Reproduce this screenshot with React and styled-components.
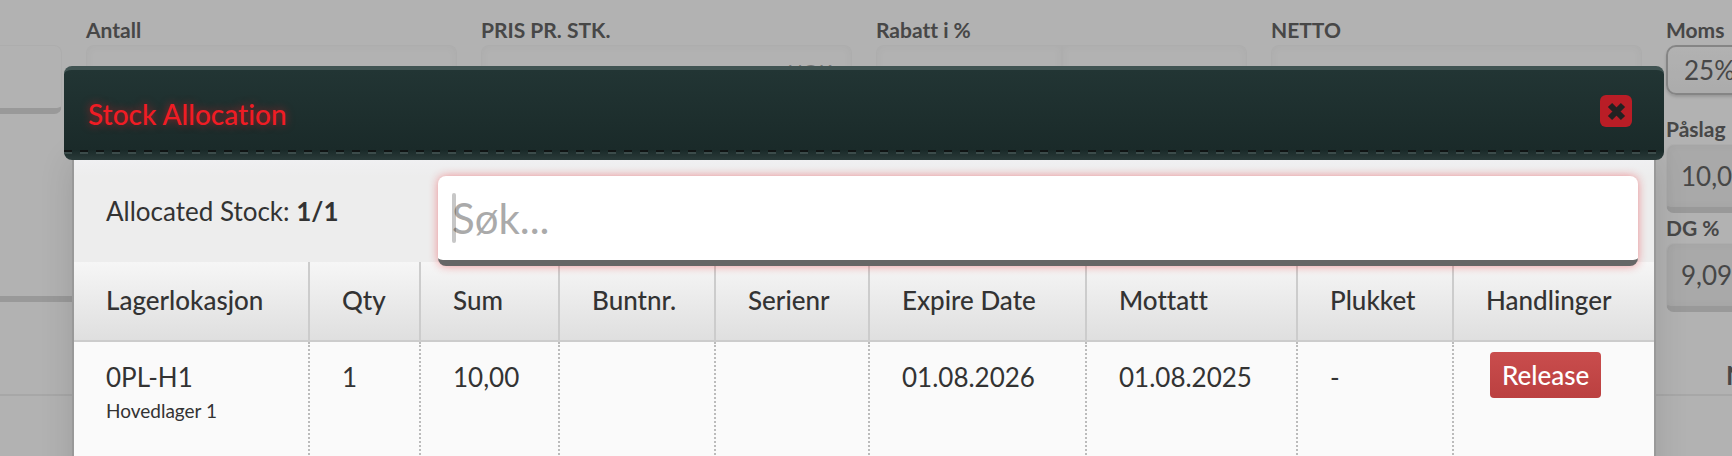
import { useState } from 'react';
import styled, { createGlobalStyle } from 'styled-components';

const columns = [
    { name: 'Lagerlokasjon', width: 236 },
    { name: 'Qty', width: 111 },
    { name: 'Sum', width: 139 },
    { name: 'Buntnr.', width: 156 },
    { name: 'Serienr', width: 154 },
    { name: 'Expire Date', width: 217 },
    { name: 'Mottatt', width: 211 },
    { name: 'Plukket', width: 156 },
    { name: 'Handlinger', width: 200 },
];

const stock = [
    {
        location: '0PL-H1',
        warehouse: 'Hovedlager 1',
        qty: '1',
        sum: '10,00',
        bundle: '',
        serial: '',
        expires: '01.08.2026',
        received: '01.08.2025',
        picked: '-',
    },
];

function OrderLine () {
    return (
        <>
            <LineForm>
                <div>
                    <Field>
                        <FieldInput $cut aria-label='Produkt' />
                    </Field>
                    <Comment aria-label='Kommentar' />
                </div>
                <Field>
                    <FieldLabel htmlFor='antall'>Antall</FieldLabel>
                    <FieldInput id='antall' />
                </Field>
                <Field>
                    <FieldLabel htmlFor='pris'>PRIS PR. STK.</FieldLabel>
                    <CurrencyInput id='pris' defaultValue='NOK' />
                </Field>
                <Field>
                    <FieldLabel htmlFor='rabatt'>Rabatt i %</FieldLabel>
                    <FieldGroup>
                        <FieldInput id='rabatt' $first />
                        <FieldInput aria-label='Rabatt' $last />
                    </FieldGroup>
                </Field>
                <Field>
                    <FieldLabel htmlFor='netto'>NETTO</FieldLabel>
                    <FieldInput id='netto' />
                </Field>
                <SideFields>
                    <Field>
                        <FieldLabel htmlFor='moms'>Moms</FieldLabel>
                        <FieldSelect id='moms'>
                            <option>25%</option>
                        </FieldSelect>
                    </Field>
                    <Field>
                        <FieldLabel htmlFor='paslag'>Påslag</FieldLabel>
                        <FieldInput id='paslag' $filled defaultValue='10,00' />
                    </Field>
                    <Field>
                        <FieldLabel htmlFor='dg'>DG %</FieldLabel>
                        <FieldInput id='dg' $filled defaultValue='9,09' />
                    </Field>
                </SideFields>
            </LineForm>
            <LineTotal>N</LineTotal>
        </>
    );
}

export default function App () {
    const [search, setSearch] = useState('');

    return (
        <>
            <GlobalStyle />
            <Page>
                <OrderLine />
                <Backdrop />
                <Modal role='dialog' aria-labelledby='modal-title'>
                    <ModalHeader>
                        <ModalTitle id='modal-title'>Stock Allocation</ModalTitle>
                        <CloseButton type='button' aria-label='Close'>
                            <svg width='20' height='20' viewBox='0 0 20 20'>
                                <path
                                    d='M4 4 L17 17 M17 4 L4 17'
                                    stroke='#222'
                                    strokeWidth='6'
                                    strokeLinejoin='round'
                                />
                            </svg>
                        </CloseButton>
                    </ModalHeader>
                    <ModalBody>
                        <SearchBar>
                            <Allocated>Allocated Stock: <b>1/1</b></Allocated>
                            <SearchBox>
                                <SearchInput
                                    type='text'
                                    aria-label='Søk'
                                    placeholder='Søk...'
                                    value={search}
                                    onChange={(e) => setSearch(e.target.value)}
                                />
                                {!search && <Caret />}
                            </SearchBox>
                        </SearchBar>
                        <StockTable>
                            <colgroup>
                                {columns.map(col => <Col key={col.name} $width={col.width} />)}
                            </colgroup>
                            <thead>
                                <tr>
                                    {columns.map(col => <HeadCell key={col.name}>{col.name}</HeadCell>)}
                                </tr>
                            </thead>
                            <tbody>
                                {stock.map(row => (
                                    <tr key={row.location}>
                                        <Cell>
                                            {row.location}
                                            <Warehouse>{row.warehouse}</Warehouse>
                                        </Cell>
                                        <Cell>{row.qty}</Cell>
                                        <Cell>{row.sum}</Cell>
                                        <Cell>{row.bundle}</Cell>
                                        <Cell>{row.serial}</Cell>
                                        <Cell>{row.expires}</Cell>
                                        <Cell>{row.received}</Cell>
                                        <Cell>{row.picked}</Cell>
                                        <Cell $actions>
                                            <ReleaseButton type='button'>Release</ReleaseButton>
                                        </Cell>
                                    </tr>
                                ))}
                            </tbody>
                        </StockTable>
                    </ModalBody>
                </Modal>
            </Page>
        </>
    );
}

const GlobalStyle = createGlobalStyle`
    * {
        box-sizing: border-box;
    }

    body {
        margin: 0;
        overflow: hidden;
        background: #fff;
        color: #333;
        font-family: Lato, 'Liberation Sans', sans-serif;
        font-size: 26px;
        font-variant-ligatures: none;
    }

    button, input, select {
        font-family: inherit;
    }
`;

const Page = styled.div`
    position: relative;
    height: 100vh;
    overflow: hidden;
`;

const LineForm = styled.form`
    display: grid;
    grid-template-columns: 62px repeat(4, 1fr) 66px;
    gap: 24px;
    height: 396px;
    padding-top: 16px;
    border-bottom: 2px solid #efefef;
    color: #666;
`;

const Field = styled.div`
    display: flex;
    flex-direction: column;
    justify-content: flex-end;
    align-self: start;
    min-width: 0;
    min-height: 98px;
`;

const SideFields = styled.div`
    display: flex;
    flex-direction: column;
    width: 120px;

    ${Field} {
        min-height: 99px;
        justify-content: flex-start;
    }
`;

const FieldLabel = styled.label`
    height: 29px;
    font-size: 21px;
    font-weight: 700;
    line-height: 27px;
    white-space: nowrap;
`;

const radius = ({ $cut, $first, $last }) => {
    if ($cut || $last) return '0 8px 8px 0';
    if ($first) return '8px 0 0 8px';
    return '8px';
};

const FieldInput = styled.input`
    width: 100%;
    height: 69px;
    padding: 0 12px 0 14px;
    border: 1px solid #f8f8f8;
    border-left-width: ${({ $cut }) => $cut ? 0 : 1}px;
    border-bottom: 6px solid #dbdbdb;
    border-radius: ${radius};
    background: ${({ $filled }) => $filled ? '#f2f2f2' : '#fff'};
    box-shadow: ${({ $cut }) => $cut ? 'none' : 'inset 0 0 8px rgba(0, 0, 0, 0.04)'};
    color: inherit;
    font-size: 26px;
`;

const CurrencyInput = styled(FieldInput)`
    padding: 0 19px 12px 14px;
    color: #aaa;
    font-size: 20px;
    text-align: right;
`;

const Comment = styled.textarea`
    display: block;
    width: 80px;
    height: 188px;
    border: 0;
    border-bottom: 6px solid #dbdbdb;
    background: transparent;
    resize: none;
`;

const FieldGroup = styled.div`
    display: flex;
`;

const FieldSelect = styled.select`
    appearance: none;
    height: 50px;
    padding: 0 16px;
    border: 2px solid #bfbfbf;
    border-radius: 10px;
    background: linear-gradient(#fff, #f6f6f6);
    box-shadow: 0 2px 3px rgba(0, 0, 0, 0.15);
    color: inherit;
    font-size: 26px;
`;

const LineTotal = styled.div`
    width: 66px;
    height: 42px;
    margin: -42px 0 0 auto;
    padding-left: 60px;
    color: #666;
    font-size: 26px;
    font-weight: 700;
    line-height: 42px;
`;

const Backdrop = styled.div`
    position: absolute;
    inset: 0;
    background: rgba(0, 0, 0, 0.3);
`;

const Modal = styled.div`
    position: absolute;
    top: 66px;
    left: 64px;
    right: 68px;
`;

const ModalHeader = styled.header`
    position: relative;
    z-index: 1;
    display: flex;
    align-items: flex-start;
    justify-content: space-between;
    height: 94px;
    padding: 25px 32px 0 24px;
    border-top: 4px solid #405352;
    border-radius: 8px;
    background: linear-gradient(#223534, #1a2a29 80px, #2a3b3a);

    &::after {
        content: '';
        position: absolute;
        left: 0;
        right: 8px;
        bottom: 6px;
        height: 4px;
        background:
            repeating-linear-gradient(90deg, #101414 0 8px, transparent 8px 16px) top / 100% 2px no-repeat,
            repeating-linear-gradient(90deg, #3c4c4b 0 8px, transparent 8px 16px) bottom / 100% 2px no-repeat;
    }
`;

const ModalTitle = styled.h2`
    margin: 0;
    color: #f01c24;
    font-size: 28px;
    font-weight: 500;
    line-height: 38px;
    text-shadow: 0 0 8px rgba(240, 28, 36, 0.6);
`;

const CloseButton = styled.button`
    display: flex;
    align-items: center;
    justify-content: center;
    width: 32px;
    height: 32px;
    padding: 0;
    border: 0;
    border-radius: 6px;
    background: #b91d26;
`;

const ModalBody = styled.div`
    min-height: 400px;
    margin: 0 8px;
    border: solid #999;
    border-width: 0 2px;
    background: #fafafa;
    box-shadow: 0 0 32px rgba(0, 0, 0, 0.12);
`;

const SearchBar = styled.div`
    display: flex;
    align-items: flex-start;
    height: 102px;
    padding: 16px 16px 0 32px;
    background: linear-gradient(#f0f0f2, #ededed 16px);
`;

const Allocated = styled.div`
    width: 332px;
    line-height: 70px;
`;

const SearchBox = styled.div`
    position: relative;
    flex: 1;
    height: 90px;
`;

const SearchInput = styled.input`
    width: 100%;
    height: 100%;
    padding: 0 14px;
    border: 0;
    border-bottom: 6px solid #666;
    border-radius: 8px;
    background: #fff;
    box-shadow: 0 0 10px rgba(240, 28, 36, 0.45);
    color: #333;
    font-size: 42px;
    outline: none;

    &::placeholder {
        color: #aaa;
    }
`;

const Caret = styled.span`
    position: absolute;
    top: 17px;
    left: 14px;
    width: 4px;
    height: 50px;
    border-radius: 2px;
    background: rgba(0, 0, 0, 0.22);
    pointer-events: none;
`;

const StockTable = styled.table`
    width: 100%;
    border-collapse: separate;
    border-spacing: 0;
    table-layout: fixed;
`;

const Col = styled.col`
    width: ${({ $width }) => $width}px;
`;

const HeadCell = styled.th`
    height: 80px;
    padding: 0 0 2px 32px;
    border-right: 2px solid #ccc;
    border-bottom: 2px solid #ccc;
    background: linear-gradient(#f6f6f6, #dfdfdf);
    font-weight: 500;
    text-align: left;
    white-space: nowrap;

    &:last-child {
        border-right: 0;
    }
`;

const Cell = styled.td`
    height: 120px;
    padding: ${({ $actions }) => $actions ? '10px 0 0 36px' : '18px 0 0 32px'};
    border-right: 2px dotted #bbb;
    line-height: 34px;
    vertical-align: top;

    &:last-child {
        border-right: 0;
    }
`;

const Warehouse = styled.div`
    font-size: 19px;
`;

const ReleaseButton = styled.button`
    display: block;
    height: 46px;
    padding: 0 12px;
    border: 0;
    border-radius: 4px;
    background: linear-gradient(#c94d4d, #bb4040);
    color: #fff;
    font-size: 26px;
    font-weight: 500;
`;
